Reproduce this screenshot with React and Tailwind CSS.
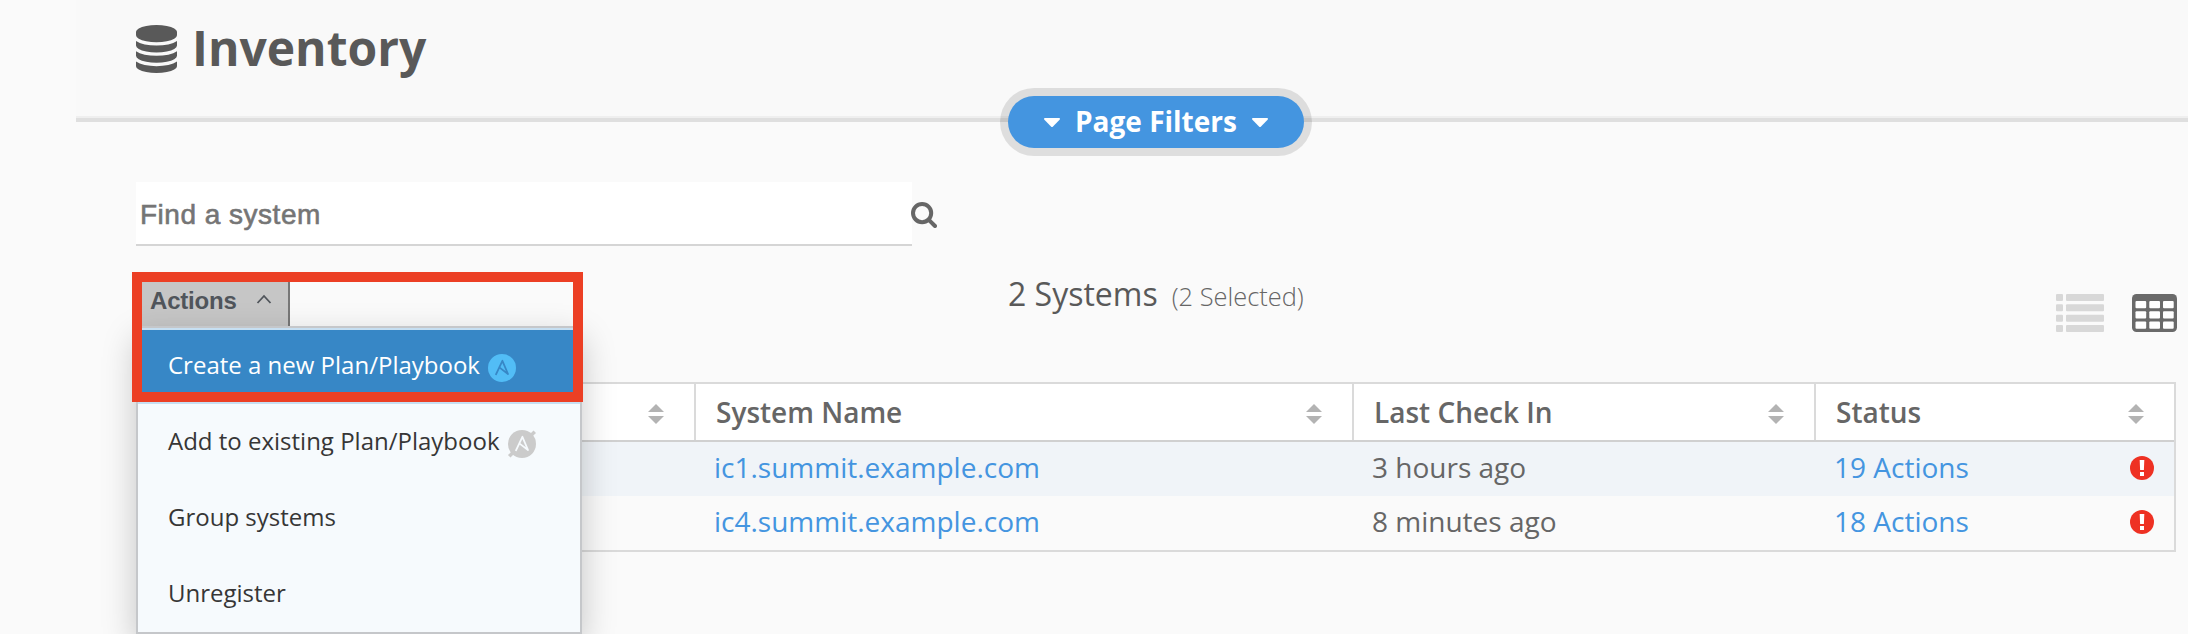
const columns = [
  { label: '', width: 'w-[558px]', border: 'border-r-2' },
  { label: 'System Name', width: 'w-[658px]', border: 'border-r-2' },
  { label: 'Last Check In', width: 'w-[462px]', border: 'border-r-2' },
  { label: 'Status', width: 'w-[358px]', border: '' },
];

const systems = [
  { name: 'ic1.summit.example.com', seen: '3 hours ago', status: '19 Actions', bg: 'bg-[#f0f4f8]' },
  { name: 'ic4.summit.example.com', seen: '8 minutes ago', status: '18 Actions', bg: 'bg-[#fafafa]' },
];

function DatabaseIcon() {
  return (
    <svg className="h-12 w-[41px] shrink-0" viewBox="0 0 1536 1792" preserveAspectRatio="none" fill="#595959">
      <path d="M768 768q237 0 443-43t325-127v170q0 69-103 128t-280 93.500-385 34.500-385-34.500-280-93.500-103-128v-170q119 84 325 127t443 43zM768 1536q237 0 443-43t325-127v170q0 69-103 128t-280 93.500-385 34.500-385-34.500-280-93.500-103-128v-170q119 84 325 127t443 43zM768 1152q237 0 443-43t325-127v170q0 69-103 128t-280 93.500-385 34.500-385-34.500-280-93.500-103-128v-170q119 84 325 127t443 43zM768 0q208 0 385 34.500t280 93.500 103 128v128q0 69-103 128t-280 93.500-385 34.500-385-34.500-280-93.500-103-128v-128q0-69 103-128t280-93.500 385-34.500z" />
    </svg>
  );
}

function Caret() {
  return (
    <svg className="h-[9px] w-4 shrink-0" viewBox="0 0 16 9" fill="#fff">
      <path d="M1 0H15Q16.600 .4 15.600 1.700L9 8.400Q8 9.400 7 8.400L.4 1.700Q-.6 .4 1 0Z" />
    </svg>
  );
}

function SearchIcon() {
  return (
    <svg className="-ml-px h-[26px] w-[26px] shrink-0" viewBox="0 0 26 26" fill="none" stroke="#666">
      <circle cx="11.100" cy="11.100" r="9.100" strokeWidth="4" />
      <path d="M17.800 17.800L24 24" strokeWidth="4" strokeLinecap="round" />
    </svg>
  );
}

function SortIcon() {
  return (
    <svg className="h-5 w-4 shrink-0" viewBox="0 0 16 20" fill="#b3b3b3">
      <path d="M8 0L16 8H0ZM0 12H16L8 20Z" />
    </svg>
  );
}

function AlertIcon() {
  return (
    <svg className="h-6 w-6 shrink-0" viewBox="0 0 24 24">
      <circle cx="12" cy="12" r="12" fill="#ee3123" />
      <path d="M9.700 4H14.300L13.900 14H10.100ZM10 16H14V20H10Z" fill="#fff" />
    </svg>
  );
}

function AnsibleIcon({ disc, mark, slashed }) {
  return (
    <svg className="h-7 w-7 shrink-0" viewBox="0 0 28 28" fill="none">
      {slashed && <path d="M1.200 26.300L26.800 1.700" stroke={disc} strokeWidth="3.500" />}
      <circle cx="14" cy="14" r="14" fill={disc} />
      <path d="M8 20.300L14.400 6.800L20 20L11.300 13.400" stroke={mark} strokeWidth="1.800" strokeLinejoin="round" strokeLinecap="round" />
    </svg>
  );
}

function ListIcon() {
  return (
    <svg className="h-[38px] w-12" viewBox="0 0 48 38" fill="#d8d8d8">
      {[0, 10.300, 20.700, 31].map((y) => (
        <g key={y}>
          <rect x="0" y={y} width="7" height="7" rx="1" />
          <rect x="10" y={y} width="38" height="7" rx="1" />
        </g>
      ))}
    </svg>
  );
}

function GridIcon() {
  return (
    <svg className="h-[38px] w-[45px]" viewBox="0 0 45 38">
      <rect width="45" height="38" rx="4.500" fill="#6a6a6a" />
      {[7, 17.300, 27.600].map((y) =>
        [3.500, 17.300, 31].map((x) => (
          <rect key={`${x}-${y}`} x={x} y={y} width="10.700" height="7.200" rx="1" fill="#fff" />
        )),
      )}
    </svg>
  );
}

function MenuItem({ children, className }) {
  return (
    <li className={`flex h-[76px] items-start border-b-2 pl-[30px] pt-[18px] leading-[38px] ${className}`}>
      {children}
    </li>
  );
}

function ActionsMenu() {
  return (
    <ul className="absolute left-[136px] top-[326px] w-[446px] border-2 border-[#c5c7ca] bg-[#f6fafd] text-[24px] text-[#363636] shadow-[0_12px_32px_rgba(0,0,0,0.22)]">
      <MenuItem className="border-[#c6dff2] bg-[#3787c6] text-white shadow-[inset_0_2px_0_#c6dff2]">
        <span className="mr-2">Create a new Plan/Playbook</span>
        <span className="pt-2"><AnsibleIcon disc="#52bdf6" mark="#3787c6" /></span>
      </MenuItem>
      <MenuItem className="border-transparent">
        <span className="mr-2">Add to existing Plan/Playbook</span>
        <span className="pt-2"><AnsibleIcon disc="#cbcbcb" mark="#f6fafd" slashed /></span>
      </MenuItem>
      <MenuItem className="border-transparent">Group systems</MenuItem>
      <MenuItem className="border-transparent">Unregister</MenuItem>
    </ul>
  );
}

export default function App() {
  return (
    <div className="relative h-[634px] w-[2188px] overflow-hidden bg-[#fafafa] font-['Open_Sans',sans-serif] text-[#666]">
      <header className="relative ml-[76px] h-[122px] border-b-4 border-[#dfdfdf] bg-[#f9f9f9] pl-[60px] pt-[25px] shadow-[inset_0_-2px_0_#efefef]">
        <div className="flex gap-[15px]">
          <DatabaseIcon />
          <h1 className="text-[48px] font-bold leading-[46px] text-[#595959]">Inventory</h1>
        </div>
      </header>
      <button className="absolute left-[1008px] top-24 flex h-[52px] w-[296px] items-center justify-center gap-[15px] rounded-full bg-[#4495e0] text-[28px] font-bold text-white shadow-[0_0_0_8px_rgba(0,0,0,0.11)]">
        <Caret />
        <span className="pb-0.5 leading-[50px]">Page Filters</span>
        <Caret />
      </button>

      <div className="mt-[60px] flex items-start pl-[136px]">
        <div className="flex h-16 w-[776px] items-center border-b-2 border-[#d5d5d5] bg-white pl-1 pt-[3px] font-['Liberation_Sans',sans-serif] text-[28px] tracking-[0.5px] text-[#757575] [-webkit-text-stroke:0.6px_#757575]">
          Find a system
        </div>
        <div className="pt-5"><SearchIcon /></div>
      </div>

      <div className="flex h-[136px] items-start pl-[136px] pt-[26px]">
        <div className="flex h-[54px] w-[154px] items-center border-r-2 border-[#777] bg-[#c6c6c6] pl-3.5 pt-1 font-['Liberation_Sans',sans-serif] text-[24px] font-bold tracking-[-0.2px] text-[#50555b]">
          Actions
          <svg className="ml-[19px] mt-[-4px] h-[10px] w-4" viewBox="0 0 16 10" fill="none" stroke="#50555b" strokeWidth="1.800">
            <path d="M1.500 9L8 2L14.500 9" />
          </svg>
        </div>
        <div className="ml-[718px] flex items-baseline gap-3.5 leading-[44px]">
          <span className="text-[32px] text-[#595959]">2 Systems</span>
          <span className="text-[25.4px] font-light">(2 Selected)</span>
        </div>
        <div className="ml-auto mr-[11px] flex gap-7 pt-[22px]">
          <ListIcon />
          <GridIcon />
        </div>
      </div>

      <div className="ml-[136px] w-[2040px] border-2 border-[#dadada] text-[28px]">
        <div className="flex h-[58px] border-b-2 border-[#d0d0d0] bg-white">
          {columns.map((c) => (
            <div key={c.label} className={`flex shrink-0 items-center justify-between border-[#dadada] pl-5 pr-[30px] ${c.width} ${c.border}`}>
              <span className="font-semibold leading-[56px]">{c.label}</span>
              <span className="flex pt-[3px]"><SortIcon /></span>
            </div>
          ))}
        </div>
        {systems.map((s) => (
          <div key={s.name} className={`flex h-[54px] leading-[50px] ${s.bg}`}>
            <div className="w-[576px]" />
            <div className="w-[658px] text-[#4495e0]">{s.name}</div>
            <div className="w-[462px]">{s.seen}</div>
            <div className="flex flex-1 justify-between pr-5 text-[#4495e0]">
              <span>{s.status}</span>
              <span className="flex pt-3.5"><AlertIcon /></span>
            </div>
          </div>
        ))}
      </div>

      <ActionsMenu />
      <div className="absolute left-[132px] top-[272px] h-[130px] w-[451px] border-[10px] border-[#ec3f24]" />
    </div>
  );
}
